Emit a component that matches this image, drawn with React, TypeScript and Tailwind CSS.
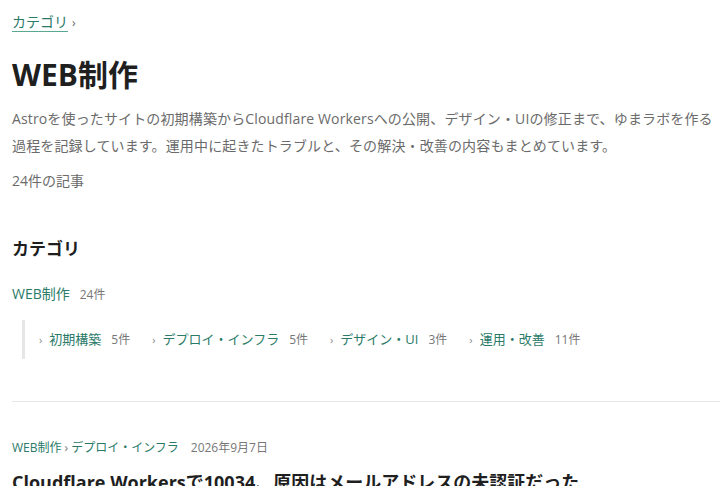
const subs = [
  { name: "初期構築", count: 5 },
  { name: "デプロイ・インフラ", count: 5 },
  { name: "デザイン・UI", count: 3 },
  { name: "運用・改善", count: 11 },
];

export default function App() {
  return (
    <div
      className="min-h-screen bg-white pl-3 text-[#222]"
      style={{ fontFamily: '"Open Sans", "Noto Sans CJK JP", sans-serif' }}
    >
      <nav className="pt-[10px] text-[14px] leading-6 text-[#666]">
        <a href="#" className="text-[#2a7a68] underline decoration-[#5aa88f] underline-offset-[4px]">
          カテゴリ
        </a>
        <span className="ml-1 text-[12px]">›</span>
      </nav>

      <h1 className="mt-[20px] text-[30px] font-bold leading-[39px] text-[#1f1f1f]">WEB制作</h1>

      <p className="mt-[11px] pr-1 text-[14px] leading-[27px] tracking-[0.01em] text-[#6b6b6b]">
        Astroを使ったサイトの初期構築からCloudflare Workersへの公開、デザイン・UIの修正まで、ゆまラボを作る過程を記録しています。運用中に起きたトラブルと、その解決・改善の内容もまとめています。
      </p>

      <p className="mt-[10px] text-[14px] leading-6 text-[#6b6b6b]">24件の記事</p>

      <section className="mt-[44px] pr-3">
        <h2 className="text-[17px] font-bold leading-6 text-[#1f1f1f]">カテゴリ</h2>

        <div className="mt-[21px] flex items-baseline gap-[10px] leading-6">
          <a href="#" className="text-[14px] text-[#2a7a68]">WEB制作</a>
          <span className="text-[12px] text-[#777]">24件</span>
        </div>

        <ul className="ml-[10px] mt-[13px] flex flex-wrap gap-x-[22px] border-l-[3px] border-[#e6e6e6] py-[7px] pl-[14px]">
          {subs.map((s) => (
            <li key={s.name} className="flex items-baseline leading-6">
              <span className="mr-[7px] text-[11px] text-[#888]">›</span>
              <a href="#" className="text-[13px] text-[#2a7a68]">{s.name}</a>
              <span className="ml-[10px] text-[12px] text-[#777]">{s.count}件</span>
            </li>
          ))}
        </ul>
      </section>

      <hr className="mt-[42px] border-t border-[#e8e8e8]" />

      <article className="mt-[34px]">
        <div className="flex items-baseline text-[12px] leading-6">
          <a href="#" className="text-[#2a7a68]">WEB制作</a>
          <span className="mx-[3px] text-[#777]">›</span>
          <a href="#" className="text-[#2a7a68]">デプロイ・インフラ</a>
          <span className="ml-[12px] text-[#777]">2026年9月7日</span>
        </div>
        <h3 className="mt-[8px] text-[18px] font-bold leading-7 text-[#1f1f1f]">
          Cloudflare Workersで10034、原因はメールアドレスの未認証だった
        </h3>
      </article>
    </div>
  );
}
